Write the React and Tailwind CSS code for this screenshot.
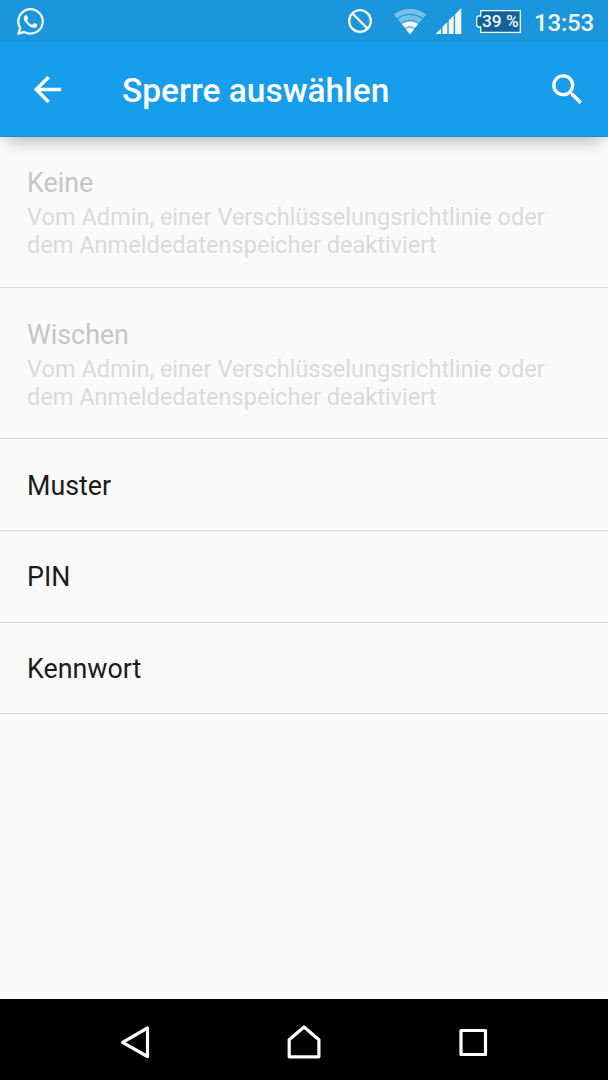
const DISABLED_TEXT =
  'Vom Admin, einer Verschlüsselungsrichtlinie oder dem Anmeldedatenspeicher deaktiviert';

const locks = [
  { title: 'Keine', disabled: true, height: 'h-[151px]' },
  { title: 'Wischen', disabled: true, height: 'h-[151px] pt-px' },
  { title: 'Muster', height: 'h-[92px] pt-[2px]' },
  { title: 'PIN', height: 'h-[92px]' },
  { title: 'Kennwort', height: 'h-[91px] pt-[2px]' },
];

function StatusBar() {
  return (
    <div className="flex h-[42px] shrink-0 items-center bg-[#1b96dc] pl-[17px] text-[#f2f7fb]">
      {/* WhatsApp */}
      <svg className="h-[27px] w-[27px]" viewBox="0 0 24 24" fill="currentColor">
        <path d="M17.47 14.38c-.3-.15-1.76-.87-2.03-.97-.27-.1-.47-.15-.67.15-.2.3-.77.97-.94 1.16-.17.2-.35.22-.64.08-.3-.15-1.26-.46-2.39-1.48-.88-.79-1.48-1.76-1.65-2.06-.17-.3-.02-.46.13-.6.13-.14.3-.35.45-.53.15-.17.2-.3.3-.5.1-.2.05-.37-.03-.52-.07-.15-.67-1.61-.91-2.2-.25-.6-.49-.5-.67-.51h-.57c-.2 0-.52.07-.8.37-.27.3-1.04 1.02-1.04 2.48s1.07 2.88 1.21 3.07c.15.2 2.1 3.2 5.08 4.49.71.3 1.26.49 1.7.63.71.22 1.36.19 1.87.12.57-.09 1.76-.72 2-1.42.25-.69.25-1.29.18-1.41-.08-.12-.27-.2-.57-.35zM12.05 21.79a9.87 9.87 0 0 1-5.03-1.38l-.36-.21-3.74.98 1-3.65-.24-.37a9.86 9.86 0 1 1 8.37 4.63zM12.05 0C5.5 0 .16 5.34.16 11.89c0 2.1.55 4.14 1.59 5.95L.06 24l6.3-1.65a11.88 11.88 0 1 0 5.69-22.35z" />
      </svg>

      <div className="ml-auto flex items-center">
        {/* Do not disturb */}
        <svg className="h-6 w-6" viewBox="0 0 24 24" fill="none" stroke="currentColor" strokeWidth="2.3">
          <circle cx="12" cy="12" r="10.8" />
          <path d="M4.4 4.4l15.2 15.2" />
        </svg>

        {/* Wi-Fi */}
        <svg className="ml-[21px] h-7 w-[34px]" viewBox="0 0 34 28" fill="currentColor">
          <path d="M.8 7.4C10.2.3 23.8.3 33.2 7.4L29.9 11.3C22.4 5.3 11.6 5.3 4.1 11.3z" fillOpacity=".42" />
          <path d="M4.8 12.2C12 6.6 22 6.6 29.2 12.2L25.9 16.2C20.4 11.8 13.6 11.8 8.1 16.2z" fillOpacity=".42" />
          <path d="M8.7 16.900C13.5 13.200 20.500 13.200 25.300 16.900L21.800 21.200C18.900 18.900 15.100 18.900 12.200 21.200z" />
          <path d="M12.7 21.9C15.3 20 18.700 20 21.300 21.900L17 27.600z" />
        </svg>

        {/* Mobile signal */}
        <svg className="ml-[9px] h-[26px] w-[26px]" viewBox="0 0 26 26" fill="currentColor">
          <path d="M0 26v-.5L5 20.400V26zM6.400 26v-7l4.900-5v12zM12.700 26V12.600l5-5V26zM19.100 26V6.200L25.300 0v26z" />
        </svg>

        {/* Battery */}
        <div className="relative ml-[14px] h-[23px] w-[45px]">
          <svg className="h-[23px] w-[45px]" viewBox="0 0 45 23">
            <path
              d="M4.700.700H44.300V22.300H4.700V17H2.200L.700 15.500V7.500L2.200 6H4.700z"
              fill="#126298"
              stroke="currentColor"
              strokeWidth="1.3"
            />
          </svg>
          <span className="absolute inset-0 pl-[6px] text-[17.3px] leading-[23px] font-medium whitespace-nowrap">
            39 %
          </span>
        </div>

        <span className="mt-[3px] ml-[13px] w-[74px] text-[24px] leading-7 font-medium tracking-[-0.2px]">13:53</span>
      </div>
    </div>
  );
}

function Header() {
  return (
    <header className="relative z-10 flex h-[95px] shrink-0 items-center border-b border-[#1c8fd2] bg-[#169dec] pr-5 pl-[27px] text-white">
      <svg className="h-[41px] w-[41px]" viewBox="0 0 24 24" fill="currentColor">
        <path d="M20 11H7.83l5.59-5.59L12 4l-8 8 8 8 1.41-1.41L7.83 13H20v-2z" />
      </svg>
      <h1 className="mt-[5px] ml-[54px] text-[33.5px] font-medium">Sperre auswählen</h1>
      <svg className="ml-auto h-[41px] w-[41px]" viewBox="0 0 24 24" fill="currentColor">
        <path d="M15.5 14h-.79l-.28-.27A6.471 6.471 0 0 0 16 9.5 6.5 6.5 0 1 0 9.5 16c1.61 0 3.09-.59 4.23-1.57l.27.28v.79l5 4.99L20.49 19l-4.99-5zm-6 0C7.01 14 5 11.99 5 9.5S7.01 5 9.5 5 14 7.01 14 9.5 11.99 14 9.5 14z" />
      </svg>
      {/* Shadow, weaker towards both edges */}
      <div className="absolute inset-x-0 top-full mt-px h-[22px] overflow-hidden">
        <div className="mx-2 -mt-5 h-5 shadow-[0_3px_16px_1px_rgba(0,0,0,0.28)]" />
      </div>
    </header>
  );
}

function LockRow({ title, disabled, height }) {
  return (
    <li className={`${height} flex flex-col justify-center border-b border-[#d8d8d8] px-[27px]`}>
      <div className={`text-[26.8px] leading-9 ${disabled ? 'text-[#c6c6c6]' : 'text-[#1c1c1c]'}`}>
        {title}
      </div>
      {disabled && (
        <p className="mt-[2px] text-[23.55px] leading-7 text-[#dadada]">{DISABLED_TEXT}</p>
      )}
    </li>
  );
}

function NavBar() {
  return (
    <nav className="flex h-[81px] shrink-0 items-center justify-between bg-black px-[119px] text-white">
      <svg className="mt-[5px] h-[34px] w-[34px]" viewBox="0 0 34 34" fill="none" stroke="currentColor" strokeWidth="3.2" strokeLinejoin="round">
        <path d="M28.500 3v28.500L3.600 17.300z" />
      </svg>
      <svg className="mt-[5px] h-[34px] w-[34px]" viewBox="0 0 34 34" fill="none" stroke="currentColor" strokeWidth="3.2" strokeLinejoin="round">
        <path d="M2.200 14.800L17 2l14.900 12.800v17H2.200z" />
      </svg>
      <svg className="mt-[5px] h-[34px] w-[34px]" viewBox="0 0 34 34" fill="none" stroke="currentColor" strokeWidth="3.2" strokeLinejoin="round">
        <path d="M6 5.500h24.500v24H6z" />
      </svg>
    </nav>
  );
}

export default function App() {
  return (
    <div className="flex h-[1080px] w-[608px] flex-col overflow-hidden bg-[#fafafa] font-[Roboto,sans-serif]">
      <StatusBar />
      <Header />
      <main className="flex-1">
        <ul>
          {locks.map((lock) => (
            <LockRow key={lock.title} {...lock} />
          ))}
        </ul>
      </main>
      <NavBar />
    </div>
  );
}
